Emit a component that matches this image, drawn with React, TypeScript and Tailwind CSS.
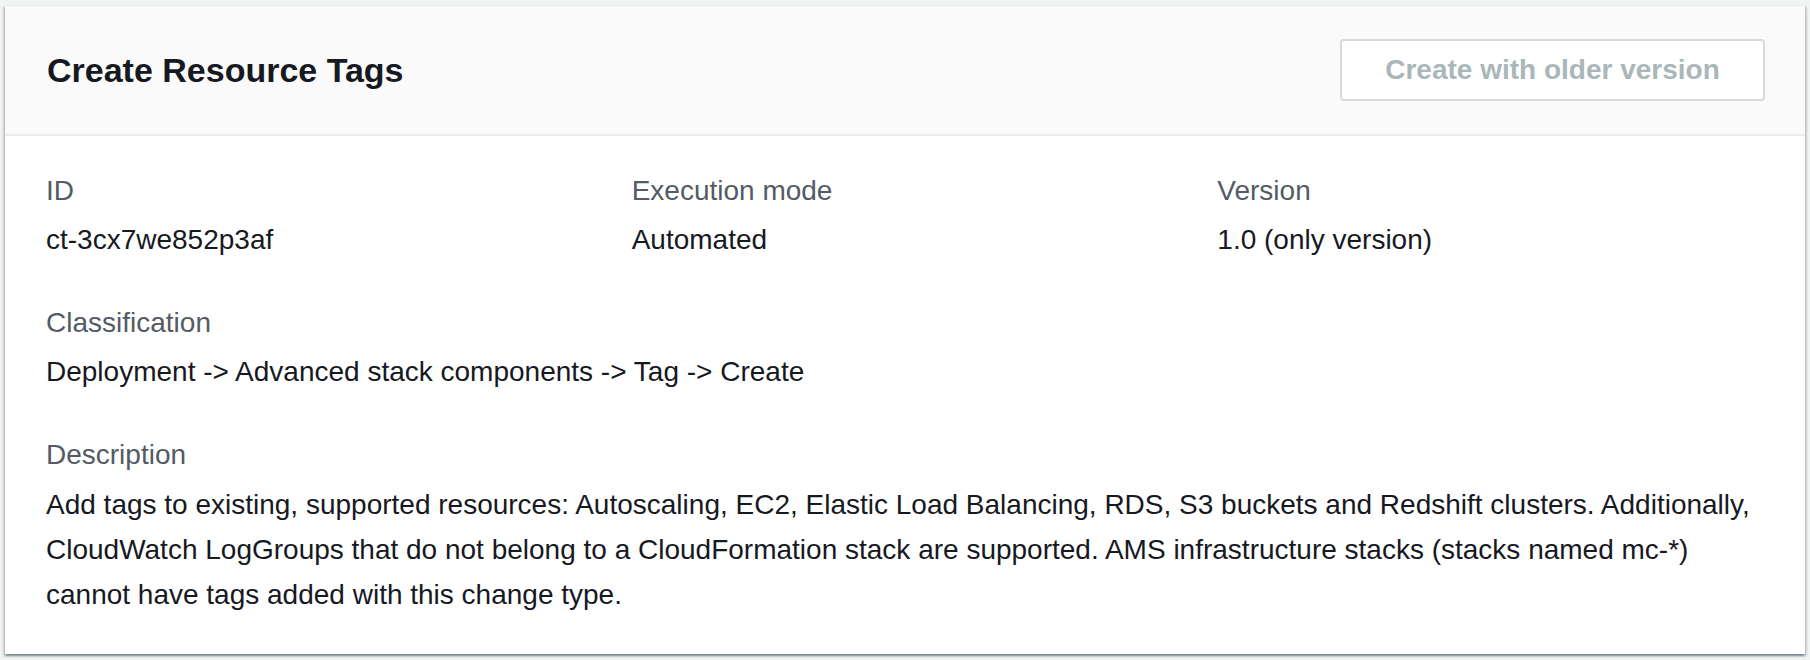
const FONT = "font-['Liberation_Sans',Arial,sans-serif]";

interface FieldProps {
  label: string;
  valueClass?: string;
  children: React.ReactNode;
}

const Field = ({ label, valueClass = 'leading-[44px]', children }: FieldProps) => (
  <div className="min-w-0">
    <div className="text-[28px] leading-[44px] text-[#545b64]">{label}</div>
    <div className={`mt-[5px] text-[28px] text-[#16191f] ${valueClass}`}>{children}</div>
  </div>
);

export default function App() {
  return (
    <div className={`${FONT} min-h-[660px] w-full bg-[#f2f3f3] px-[5px] pt-[5px]`}>
      <div className="h-[649px] bg-white border-t border-[#eaeded] shadow-[0_2px_2px_0_rgba(0,28,36,0.3),2px_2px_2px_0_rgba(0,28,36,0.15),-2px_2px_2px_0_rgba(0,28,36,0.15)]">
        {/* Header */}
        <div className="h-[130px] flex items-center justify-between bg-[#fafafa] border-b-2 border-[#eaeded] pl-[42px] pr-[40px]">
          <h1 className="text-[34px] font-bold leading-[44px] text-[#16191f]">Create Resource Tags</h1>
          <button
            disabled
            className="h-[62px] w-[425px] rounded-[4px] border-2 border-[#d5dbdb] bg-white text-[28px] font-bold text-[#aab7b8] cursor-default"
          >
            Create with older version
          </button>
        </div>

        {/* Body */}
        <div className="pl-[41px] pr-[40px] pt-[33px]">
          <div className="grid grid-cols-3 gap-x-[38px]">
            <Field label="ID">ct-3cx7we852p3af</Field>
            <Field label="Execution mode">Automated</Field>
            <Field label="Version">1.0 (only version)</Field>
          </div>
          <div className="mt-[39px]">
            <Field label="Classification">Deployment -&gt; Advanced stack components -&gt; Tag -&gt; Create</Field>
          </div>
          <div className="mt-[39px]">
            <Field label="Description" valueClass="leading-[45px]">
              <span className="whitespace-nowrap">
                Add tags to existing, supported resources: Autoscaling, EC2, Elastic Load Balancing, RDS, S3 buckets and Redshift clusters. Additionally,
              </span>
              <br />
              CloudWatch LogGroups that do not belong to a CloudFormation stack are supported. AMS infrastructure stacks (stacks named mc-*)
              <br />
              cannot have tags added with this change type.
            </Field>
          </div>
        </div>
      </div>
    </div>
  );
}
